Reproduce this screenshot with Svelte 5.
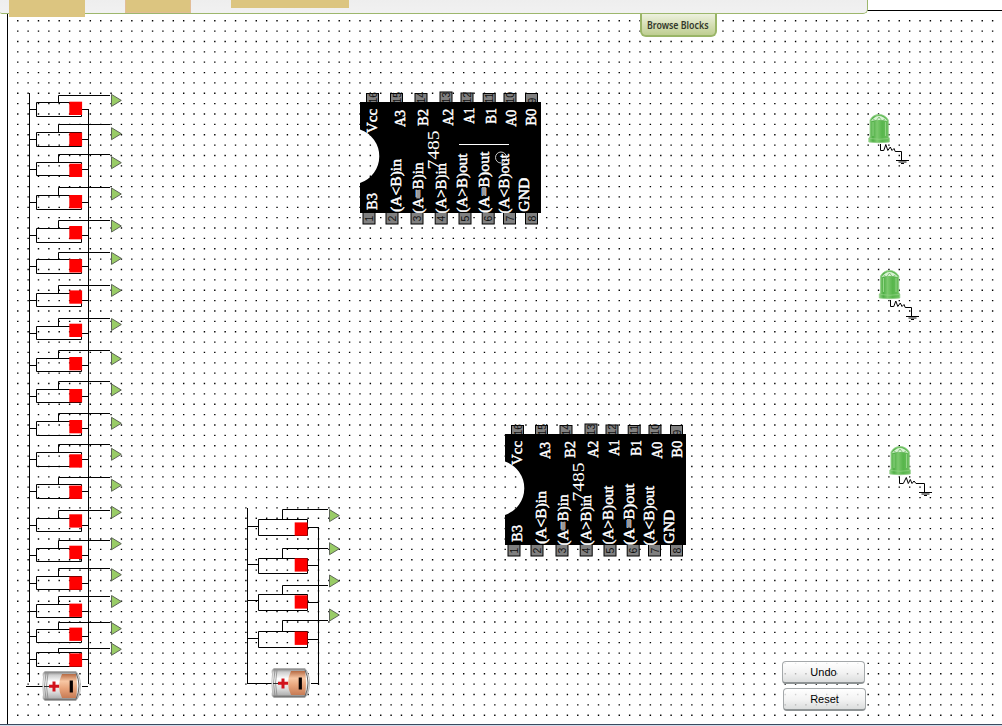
<script>
  const P = 10.371;
  let dots = '';
  for (let r = 0; r < 68; r++)
    for (let c = 0; c < 95; c++)
      dots += `M${(17.05 + c * P).toFixed(2)} ${(20.05 + r * 10.366).toFixed(2)}h1.4v1.35h-1.4z`;

  // wire, box top, box bottom, toggle top, left lead, right lead, output centre
  const bankA = {
    left: 29.5, box: 36.5, right: 81.5, rail: 88.5, stub: 58.5, end: 110, red: 69.3, tri: 111.3,
    top: 93, bottom: 682, start: 109, finish: 684,
    rows: [
      [95, 102, 116, 101.7, 109, 109, 100.4], [124, 132, 146, 132.7, 139, 139, 133.7],
      [154, 162, 175, 163.7, 169, 169, 162.7], [187, 195, 209, 195, 202, 202, 194],
      [220, 228, 242, 226, 235, 235, 226], [252, 259, 273, 259.2, 266, 266, 258.4],
      [285, 293, 306, 290.4, 300, 300, 290.4], [318, 326, 339, 323.7, 333, 333, 324.5],
      [350, 358, 371, 357, 365, 365, 358.8], [381, 389, 402, 389, 396, 396, 390],
      [413, 421, 435, 420, 428, 428, 423.3], [444, 452, 466, 454.3, 459, 459, 454.3],
      [477, 484, 498, 485.6, 491, 491, 485.3], [510, 518, 531, 514.3, 525, 525, 512.3],
      [540, 548, 561, 545.7, 555, 555, 543.7], [568, 576, 589, 576.5, 583, 583, 574.7],
      [596, 604, 617, 603.6, 611, 611, 601.5], [622, 629, 642, 627.6, 636, 636, 628.6],
      [648, 652, 666, 653.4, 659, 659, 649.3]
    ]
  };
  const bankB = {
    left: 247.5, box: 258.5, right: 307.5, rail: 318.5, stub: 282.5, end: 328, red: 294.7, tri: 329.3,
    top: 508, bottom: 684, start: 527, finish: 685,
    rows: [
      [509, 519, 535, 522.4, 526, 527, 515.6], [548, 558, 573, 558.3, 564, 565, 548.7],
      [585, 594, 610, 595.3, 600, 602, 581], [620, 631, 647, 631.6, 638, 639, 615]
    ]
  };

  const topPins = [[366, 93], [390, 93], [414.5, 93], [439.5, 91.5], [460.5, 92.5], [482.7, 93], [503.5, 93], [525, 93]];
  const bottomPins = [362.5, 385.5, 410.5, 434.7, 458.5, 481.7, 503, 525];
  // text, baseline x, start y, run length, shift on the second chip
  const labels = [
    ['Vcc', 377.3, 133.3, 24.5, 0], ['A3', 405, 127, 17, 0], ['B2', 428.3, 126, 17, 1.3],
    ['A2', 453, 125.7, 17, 0], ['A1', 474.3, 123.7, 16, 0], ['B1', 496, 123.7, 15.5, 0],
    ['A0', 515.7, 126.7, 17, 1.3], ['B0', 536.3, 125.7, 17, 1],
    ['B3', 377.3, 210, 17, 0], ['(A<B)in', 400.7, 212, 53, 0], ['(A=B)in', 423, 213.5, 51, 0],
    ['(A>B)in', 446, 213.5, 50.5, 0], ['(A>B)out', 466.7, 212.5, 59, 1],
    ['(A=B)out', 488.7, 213, 61.5, 0], ['(A<B)out', 508.7, 213.5, 59.5, 0], ['GND', 529.3, 211.7, 34, 0]
  ];
  const chips = [{ x: 0, y: 0, n: 0 }, { x: 145, y: 332, n: 1 }];
  const leds = [
    { x: 868, y: 114, tail: 'M880.5 144v6.5h3.3l2-6 2 6 2.5-3.5 1.7 3.5 2-2 1.2 3h6.3v9', g: 902, gy: 160.5 },
    { x: 878.5, y: 270, tail: 'M890.5 300v6.5h3.3l2-5.5 2 5.5 2.5-3.5 1.7 3.5 2-2 1.2 3h6.3v9', g: 912, gy: 316.5 },
    { x: 889, y: 446, tail: 'M899.5 477v6.5h3.8l3-6 2 6 2-4 1.7 4 2-2.5 2 2.5h8.5v9', g: 925, gy: 492.5 }
  ];
  const cells = [{ x: 42, y: 671 }, { x: 271, y: 668 }];
</script>

<main>
  <header>
    <i class="slot one"></i><i class="slot two"></i><i class="slot three"></i>
  </header>
  <button class="browse"><svg width="62" height="14"><text x="0" y="11" textLength="61.5" lengthAdjust="spacingAndGlyphs">Browse Blocks</text></svg></button>

  <svg class="board" width="1002" height="726" viewBox="0 0 1002 726">
    <defs>
      <linearGradient id="metal" x2="0" y2="1">
        <stop offset="0" stop-color="#777" /><stop offset=".12" stop-color="#ccc" />
        <stop offset=".35" stop-color="#fff" /><stop offset=".7" stop-color="#ddd" />
        <stop offset=".9" stop-color="#b5b5b5" /><stop offset="1" stop-color="#555" />
      </linearGradient>
      <linearGradient id="copper" x2="0" y2="1">
        <stop offset="0" stop-color="#b66a43" /><stop offset=".3" stop-color="#f8c7a4" />
        <stop offset=".6" stop-color="#e9a47b" /><stop offset="1" stop-color="#c67b55" />
      </linearGradient>
      <linearGradient id="lens">
        <stop offset="0" stop-color="#8fd482" /><stop offset=".2" stop-color="#4fae45" />
        <stop offset=".4" stop-color="#7cc96e" /><stop offset=".65" stop-color="#57b64b" />
        <stop offset="1" stop-color="#6fc062" />
      </linearGradient>
    </defs>
    <path d={dots} fill="#000" />
    <path d="M867 10.5H1002M7.5 14V724" stroke="#000" fill="none" />

    {#each [bankA, bankB] as b}
      <path class="wire" d={`M${b.left} ${b.top}V${b.bottom}M${b.rail} ${b.start}V${b.finish}`} />
      {#each b.rows as [w, t, bt, r, l, rr, o]}
        <path class="wire" d={`M${b.stub} ${t}V${w + 0.5}H${b.end}M${b.box} ${t + 0.5}H${b.right}V${bt + 0.5}H${b.box}ZM${b.left} ${l + 0.5}H${b.box}M${b.right} ${rr + 0.5}H${b.rail}`} />
        <rect x={b.red} y={r} width="12.8" height="13.3" fill="#f00" />
        <path d={`M${b.tri + 0.2} ${o - 6}L${b.tri + 10} ${o}L${b.tri + 0.2} ${o + 6}Z`} fill="#99cc66" stroke="#5e6658" stroke-width="1" />
      {/each}
    {/each}

    <path class="wire" d="M26 686.5H45M82 686.5H88M247 683.5H275M311 683.5H319" />
    {#each cells as c}
      <g transform={`translate(${c.x} ${c.y})`}>
        <path d="M3 .5H34Q38.5 5 38.5 15T34 29.5H3Q0 28 1.5 24Q0 15 1.5 6Q0 2 3 .5Z" fill="url(#metal)" stroke="#aaa" stroke-width=".7" />
        <path d="M4 2Q1 15 4 28M6 2Q3 15 6 28" stroke="#888" stroke-width=".8" fill="none" />
        <path d="M20 3H34Q36 15 34 27H20Q14 15 20 3Z" fill="url(#copper)" />
        <path d="M34 2Q37 8 37 15T34 28" stroke="#666" stroke-width="1" fill="none" />
        <path d="M7 15.3H17M12 10.5V20.5" stroke="#d1121b" stroke-width="3" />
        <path d="M2 15.5H7" stroke="#333" />
        <rect x="27.7" y="9.5" width="3.2" height="12" fill="#080000" />
      </g>
    {/each}

    {#each chips as c}
      <g transform={`translate(${c.x} ${c.y})`}>
        {#each topPins as [x, y], i}
          <rect class="pin" x={x + 0.5} y={y + 0.5} width="12" height="11" />
          <text class="num" transform={`translate(${x + 10.5} 103.5) rotate(-90)`}>{16 - i}</text>
        {/each}
        {#each bottomPins as x, i}
          <rect class="pin" x={x + 0.5} y="212.5" width="12" height="11.5" />
          <text class="num" transform={`translate(${x + 10.5} 221.5) rotate(-90)`}>{i + 1}</text>
        {/each}
        <path d="M360 102H541V213H360V183A28.2 28.2 0 0 0 360 129.5Z" fill="#000" />
        {#each labels as [t, x, y, len, dx]}
          <text class="label" textLength={len} lengthAdjust="spacingAndGlyphs" transform={`translate(${x + dx * c.n} ${y}) rotate(-90)`}>{t}</text>
        {/each}
        <rect x="416.3" y="190" width="3.8" height="8.5" fill="#999" />
        <rect x="482" y="187" width="3.8" height="8.5" fill="#999" />
        <text class="part" textLength="39" lengthAdjust="spacingAndGlyphs" transform="translate(438.5 169.5) rotate(-90)">7485</text>
      </g>
    {/each}
    <path d="M459 144.5H509" stroke="#fff" />
    <circle cx="501" cy="157.5" r="5.5" fill="none" stroke="#ddd" stroke-width=".9" />

    {#each leds as d}
      <g transform={`translate(${d.x} ${d.y})`}>
        <path d="M2 23V6Q5 .5 11 .5T20.3 6V23L21.3 24V28Q11 29.5 .8 28V24Z" fill="url(#lens)" stroke="#91cd87" stroke-width=".8" />
        <path d="M3 7Q11 -3 19.5 7Q11 5 3 7Z" fill="#d8f3d3" />
        <path d="M5 5l3 2 3-4 3 4 3-2" stroke="#72b569" stroke-width=".8" fill="none" />
        <path d="M5 8V22M17.5 8V22" stroke="#93d587" stroke-width="1" />
        <path d="M2 24.5Q11 26 20.5 24.5" stroke="#8fd083" stroke-width=".8" fill="none" />
      </g>
      <path class="wire" d={d.tail} />
      <path class="wire" d={`M${d.g - 6} ${d.gy}h13M${d.g - 3.5} ${d.gy + 1.5}h8M${d.g - 1} ${d.gy + 3}h3`} />
    {/each}
  </svg>

  <div class="actions">
    <button>Undo</button>
    <button class="reset">Reset</button>
  </div>
  <footer></footer>
</main>

<style>
  :global(body) { margin: 0; background: #fff; }
  main { position: relative; width: 1002px; height: 726px; overflow: hidden; background: #fff; }
  .board { position: absolute; inset: 0; }
  header {
    position: relative; z-index: 1; box-sizing: border-box; width: 868px; height: 14px;
    display: flex; align-items: flex-start; padding-left: 9px;
    background: linear-gradient(#eee, #f1f1f1);
    border: solid #9db76c; border-width: 0 1px 1px 0; border-radius: 0 0 5px 2px;
  }
  .slot { flex: none; background: #dcc580; }
  .one { width: 76px; height: 17px; }
  .two { box-sizing: border-box; width: 66px; height: 13px; margin-left: 40px; border: solid #e2bd97; border-width: 0 1px 1px; }
  .three { width: 118px; height: 8px; margin-left: 40px; }
  .browse {
    position: relative; z-index: 1; display: flex; align-items: flex-start; justify-content: flex-start;
    box-sizing: border-box; width: 77px; height: 23px; margin: 0 0 0 640px; padding: 4px 0 0 5px;
    background: linear-gradient(#edf1df, #d6dfb6 50%, #bfce92);
    border: 2px solid #9ab567; border-top: 0; border-radius: 0 0 6px 6px;
  }
  .browse svg { overflow: visible; }
  .browse text { font: 600 10.5px "Noto Sans", "Open Sans", sans-serif; fill: #33382c; }
  .wire { stroke: #000; stroke-width: 1; fill: none; }
  .pin { fill: #808080; stroke: #000; stroke-width: 1; }
  .num { font: 10.5px "Liberation Sans", sans-serif; fill: #111; }
  .label { font: 14.5px "Liberation Serif", serif; fill: #fff; stroke: #fff; stroke-width: .45px; }
  .part { font: 17.5px "Liberation Serif", serif; fill: #fff; }
  .actions { position: absolute; left: 782px; top: 661px; display: flex; flex-direction: column; gap: 4px; }
  .actions button {
    box-sizing: border-box; width: 83px; height: 23px; padding: 0;
    font: 11px "Liberation Sans", sans-serif; color: #000;
    background: linear-gradient(#fffffff0, #eeeeeec0 55%, #d5d7d7d8);
    border: 1px solid #a4a8aa; border-bottom: 2px solid #8d9293; border-radius: 4px;
  }
  .actions .reset { margin-left: 1px; }
  footer { position: absolute; left: 0; right: 0; bottom: 0; height: 1px; background: #cfdcea; border-top: 1px solid #3b4a60; }
</style>
